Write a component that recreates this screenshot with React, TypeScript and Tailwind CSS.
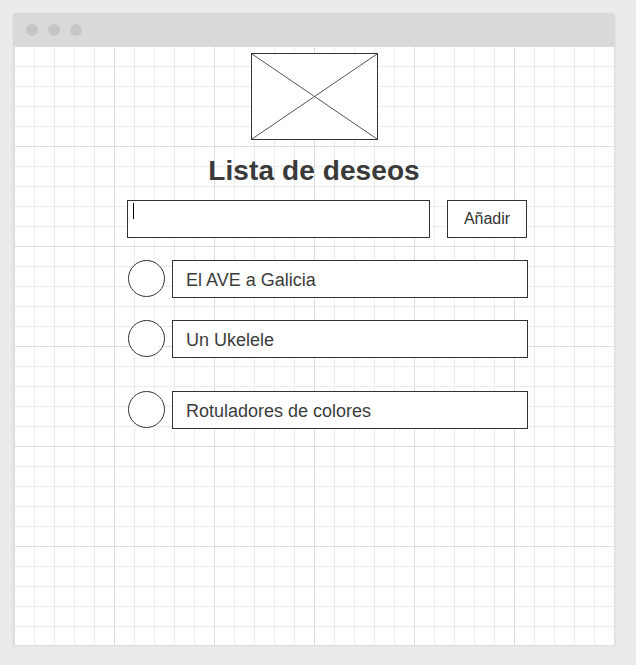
const items = ["El AVE a Galicia", "Un Ukelele", "Rotuladores de colores"];

export default function App() {
  return (
    <div className="w-[636px] h-[665px] bg-[#ebebeb] pt-[13px] font-['Liberation_Sans',Arial,sans-serif]">
      <div className="ml-[13px] w-[602px] shadow-[0_0_1px_rgba(0,0,0,0.15)]">
        {/* title bar */}
        <div className="h-[33px] bg-[#d9d9d9] rounded-t-[4px] flex items-center gap-[10px] pl-[13px]">
          <span className="w-[12px] h-[12px] rounded-full bg-[#c6c6c6]" />
          <span className="w-[12px] h-[12px] rounded-full bg-[#c6c6c6]" />
          <span className="w-[12px] h-[12px] rounded-full bg-[#c6c6c6]" />
        </div>

        {/* canvas */}
        <div className="h-[600px] bg-white border-x border-b border-[#e0e0e0] bg-[linear-gradient(to_right,#dcdcdc_1px,transparent_1px),linear-gradient(to_bottom,#dcdcdc_1px,transparent_1px),linear-gradient(to_right,#ececec_1px,transparent_1px),linear-gradient(to_bottom,#ececec_1px,transparent_1px)] bg-[size:100px_100px,100px_100px,20px_20px,20px_20px]">
          <div className="flex flex-col items-center pt-[7px]">
            <div className="w-[128px] h-[87px] pl-px">
              <svg width="127" height="87" viewBox="0 0 127 87">
                <rect x="0.5" y="0.5" width="126" height="86" fill="white" stroke="#333" strokeWidth="1" />
                <line x1="1" y1="1" x2="126" y2="86" stroke="#555" strokeWidth="1" />
                <line x1="126" y1="1" x2="1" y2="86" stroke="#555" strokeWidth="1" />
              </svg>
            </div>
            <h1 className="mt-[15px] text-[28px] leading-[32px] font-bold text-[#3a3a3a] tracking-[0.1px]">
              Lista de deseos
            </h1>
          </div>

          <div className="mt-[13px] ml-[113px] flex gap-[17px]">
            <div className="w-[303px] h-[38px] border border-[#333] bg-white">
              <div className="ml-[5px] mt-[2px] w-px h-[16px] bg-black" />
            </div>
            <button className="w-[80px] h-[38px] border border-[#333] bg-white text-[16px] text-[#333] flex items-center justify-center">
              Añadir
            </button>
          </div>

          <div className="ml-[114px] mt-[22px] flex flex-col">
            {items.map((item, index) => (
              <div
                key={item}
                className={
                  "flex gap-[7px] " +
                  (index === 1 ? "mt-[22px]" : index === 2 ? "mt-[33px]" : "")
                }
              >
                <div className="w-[37px] h-[37px] rounded-full border border-[#333] bg-white" />
                <div className="w-[356px] h-[38px] border border-[#333] bg-white flex items-center pl-[13px] pt-[2px] text-[18px] text-[#3c3c3c]">
                  {item}
                </div>
              </div>
            ))}
          </div>
        </div>
      </div>
    </div>
  );
}
